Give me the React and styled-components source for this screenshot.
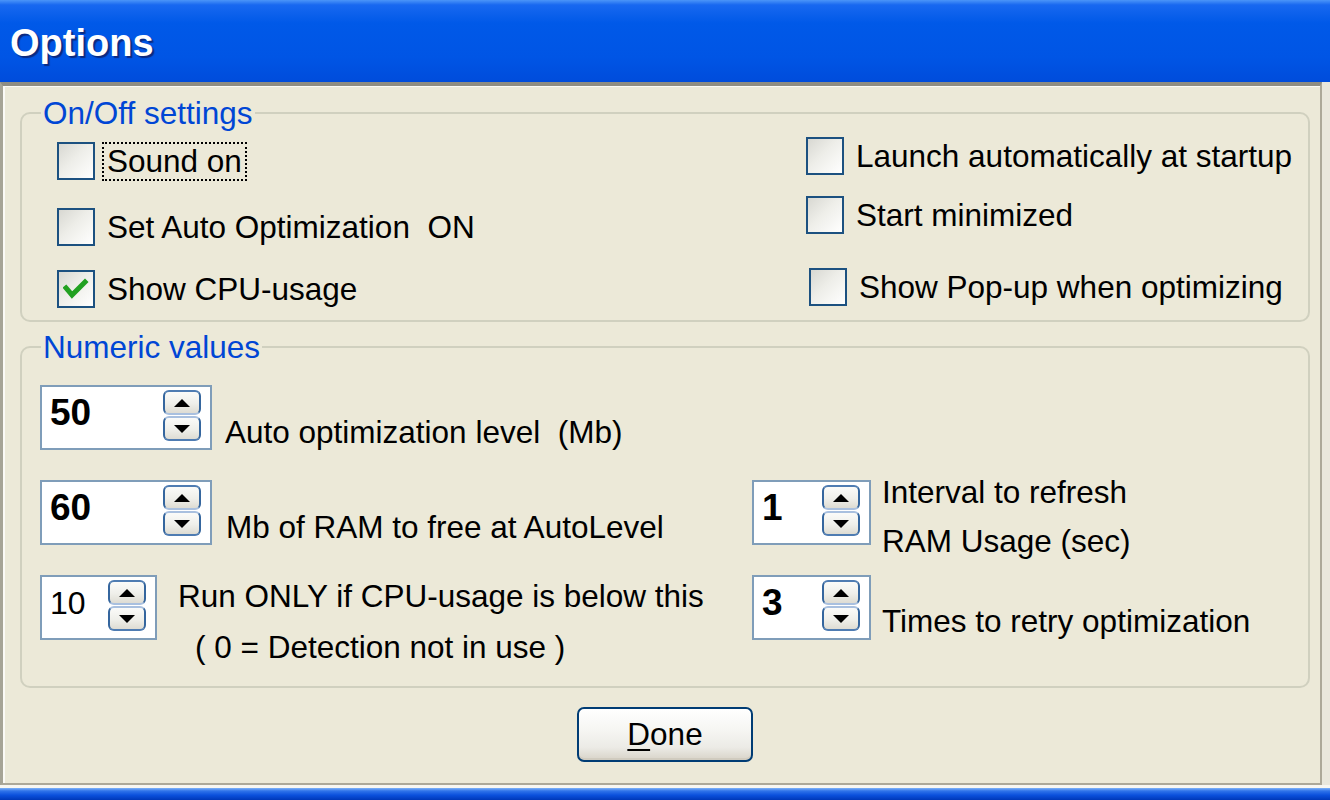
import React from 'react';
import styled, { createGlobalStyle } from 'styled-components';

const Global = createGlobalStyle`
  html, body { margin: 0; padding: 0; width: 1330px; height: 800px; overflow: hidden; background: #ECE9D8; }
  #root { width: 1330px; height: 800px; }
`;

const Window = styled.div`
  width: 1330px;
  height: 800px;
  display: flex;
  flex-direction: column;
  background: #ECE9D8;
  font-family: "Liberation Sans", Arial, sans-serif;
  color: #000;
`;

const TitleBar = styled.div`
  height: 82px;
  flex: none;
  box-sizing: border-box;
  padding: 4px 0 0 10px;
  display: flex;
  align-items: center;
  background: linear-gradient(180deg, #4b95f8 0%, #1868f0 6%, #0059e8 28%, #0055e5 70%, #004cdb 100%);
`;

const Title = styled.span`
  color: #fff;
  font-weight: 700;
  font-size: 38px;
  text-shadow: 2px 2px 1px #0b2a80;
`;

const Frame = styled.div`
  flex: 1;
  display: flex;
  min-height: 0;
`;

const Body = styled.div`
  flex: 1;
  display: flex;
  flex-direction: column;
  box-sizing: border-box;
  padding: 10px 0 0 17px;
  border-top: 4px solid #8f8d82;
  border-left: 3px solid #a6a496;
  border-right: 2px solid #aca899;
  border-bottom: 2px solid #aca899;
  box-shadow: inset 2px 1px 0 #fbfaf6;
`;

const RightEdge = styled.div`
  width: 8px;
  flex: none;
  background: #e9e7dc;
`;

const BottomBand = styled.div`
  height: 15px;
  flex: none;
  box-sizing: border-box;
  border-top: 3px solid #f7f6f1;
  background: linear-gradient(180deg, #7fb2f8 0%, #2f73ea 25%, #0b50dc 60%, #0038b8 100%);
`;

const Group = styled.fieldset`
  margin: ${p => p.$mt}px 0 0 0;
  padding: 0;
  width: 1290px;
  height: ${p => p.$h}px;
  box-sizing: border-box;
  border: 2px solid #D0D0BF;
  border-radius: 10px;
  min-width: 0;
`;

const Legend = styled.legend`
  margin-left: 19px;
  padding: 0 2px;
  font-size: 31.5px;
  line-height: 34px;
  color: #0046D5;
`;

const CheckGrid = styled.div`
  display: grid;
  grid-template-columns: 749px auto;
  padding-left: 35px;
`;

const CheckColumn = styled.div`
  display: flex;
  flex-direction: column;
`;

const CheckRow = styled.div`
  display: flex;
  align-items: center;
  height: 38px;
  margin-top: ${p => p.$mt}px;
  margin-left: ${p => p.$ml || 0}px;
`;

const Box = styled.span`
  width: 38px;
  height: 38px;
  flex: none;
  box-sizing: border-box;
  border: 2px solid #1C5180;
  background: linear-gradient(135deg, #d8d8d2 0%, #eeeee9 45%, #ffffff 100%);
  display: flex;
  align-items: center;
  justify-content: center;
`;

const CheckText = styled.span`
  margin-left: ${p => (p.$focus ? 7 : 12)}px;
  padding: ${p => (p.$focus ? '0 3px' : '0')};
  border: ${p => (p.$focus ? '2px dotted #000' : 'none')};
  font-size: 31.5px;
  line-height: ${p => (p.$focus ? 35 : 38)}px;
  white-space: pre;
`;

const SpinGrid = styled.div`
  display: grid;
  grid-template-columns: 712px auto;
  grid-auto-rows: 65px;
  row-gap: 30px;
  padding: 21px 0 0 18px;
`;

const SpinItem = styled.div`
  display: flex;
  align-items: flex-start;
`;

const SpinBox = styled.div`
  width: ${p => p.$w}px;
  height: 65px;
  flex: none;
  box-sizing: border-box;
  border: 2px solid #7F9DB9;
  background: #fff;
  display: flex;
  justify-content: space-between;
  align-items: flex-start;
  padding: 3px 9px 0 8px;
`;

const SpinValue = styled.span`
  font-size: ${p => (p.$bold ? 37 : 32)}px;
  font-weight: ${p => (p.$bold ? 700 : 400)};
  line-height: 46px;
`;

const SpinButtons = styled.div`
  display: flex;
  flex-direction: column;
  gap: 1px;
`;

const SpinBtn = styled.div`
  width: 38px;
  height: 25px;
  box-sizing: border-box;
  border: 2px solid #35669e;
  border-top-color: ${p => (p.$down ? '#a9c0df' : '#4f7cb2')};
  border-bottom-color: ${p => (p.$down ? '#4f7cb2' : '#a9c0df')};
  border-radius: 6px;
  background: linear-gradient(180deg, #fbfbf9 0%, #efefea 55%, #dedcd3 100%);
  display: flex;
  align-items: center;
  justify-content: center;
`;

const SpinLabel = styled.div`
  margin-left: ${p => p.$gap}px;
  margin-top: ${p => p.$top}px;
  font-size: 31.5px;
  line-height: ${p => p.$lh}px;
  white-space: pre;
`;

const Line = styled.div`
  padding-left: ${p => p.$indent || 0}px;
`;

const ButtonRow = styled.div`
  width: 1290px;
  display: flex;
  justify-content: center;
  margin-top: 19px;
`;

const Button = styled.button`
  width: 176px;
  height: 55px;
  box-sizing: border-box;
  border: 2px solid #003C74;
  border-radius: 7px;
  background: linear-gradient(180deg, #ffffff 0%, #f6f6f3 40%, #ecebe6 75%, #d8d3c8 100%);
  box-shadow: inset 0 -2px 0 #d0cbbf;
  font-family: "Liberation Sans", Arial, sans-serif;
  font-size: 31.5px;
  color: #000;
  padding: 0;
`;

const Underline = styled.span`
  text-decoration: underline;
  text-underline-offset: 4px;
  text-decoration-thickness: 2px;
`;

const Check = ({ checked }) => (
  <Box>
    {checked && (
      <svg width="26" height="22" viewBox="0 0 26 22">
        <polyline points="3,10 9,17 22,4" fill="none" stroke="#21A121" strokeWidth="5" strokeLinecap="square" />
      </svg>
    )}
  </Box>
);

const Arrow = ({ down }) => (
  <svg width="18" height="10" viewBox="0 0 18 10">
    {down ? <polygon points="1,1 17,1 9,9" fill="#000" /> : <polygon points="1,9 17,9 9,1" fill="#000" />}
  </svg>
);

const Spinner = ({ w, value, bold }) => (
  <SpinBox $w={w}>
    <SpinValue $bold={bold}>{value}</SpinValue>
    <SpinButtons>
      <SpinBtn><Arrow /></SpinBtn>
      <SpinBtn $down><Arrow down /></SpinBtn>
    </SpinButtons>
  </SpinBox>
);

export default function App() {
  return (
    <Window>
      <Global />
      <TitleBar>
        <Title>Options</Title>
      </TitleBar>
      <Frame>
        <Body>
          <Group $mt={0} $h={226}>
            <Legend>On/Off settings</Legend>
            <CheckGrid>
              <CheckColumn>
                <CheckRow $mt={12}>
                  <Check />
                  <CheckText $focus>Sound on</CheckText>
                </CheckRow>
                <CheckRow $mt={28}>
                  <Check />
                  <CheckText>{'Set Auto Optimization  ON'}</CheckText>
                </CheckRow>
                <CheckRow $mt={24}>
                  <Check checked />
                  <CheckText>Show CPU-usage</CheckText>
                </CheckRow>
              </CheckColumn>
              <CheckColumn>
                <CheckRow $mt={7}>
                  <Check />
                  <CheckText>Launch automatically at startup</CheckText>
                </CheckRow>
                <CheckRow $mt={21}>
                  <Check />
                  <CheckText>Start minimized</CheckText>
                </CheckRow>
                <CheckRow $mt={34} $ml={3}>
                  <Check />
                  <CheckText>Show Pop-up when optimizing</CheckText>
                </CheckRow>
              </CheckColumn>
            </CheckGrid>
          </Group>

          <Group $mt={8} $h={358}>
            <Legend>Numeric values</Legend>
            <SpinGrid>
              <SpinItem>
                <Spinner w={172} value="50" bold />
                <SpinLabel $gap={13} $top={29} $lh={36}>{'Auto optimization level  (Mb)'}</SpinLabel>
              </SpinItem>
              <div />
              <SpinItem>
                <Spinner w={172} value="60" bold />
                <SpinLabel $gap={14} $top={29} $lh={36}>Mb of RAM to free at AutoLevel</SpinLabel>
              </SpinItem>
              <SpinItem>
                <Spinner w={119} value="1" bold />
                <SpinLabel $gap={11} $top={-12} $lh={49}>
                  <Line>Interval to refresh</Line>
                  <Line>RAM Usage (sec)</Line>
                </SpinLabel>
              </SpinItem>
              <SpinItem>
                <Spinner w={117} value="10" />
                <SpinLabel $gap={21} $top={-4} $lh={51}>
                  <Line>Run ONLY if CPU-usage is below this</Line>
                  <Line $indent={17}>( 0 = Detection not in use )</Line>
                </SpinLabel>
              </SpinItem>
              <SpinItem>
                <Spinner w={119} value="3" bold />
                <SpinLabel $gap={11} $top={28} $lh={36}>Times to retry optimization</SpinLabel>
              </SpinItem>
            </SpinGrid>
          </Group>

          <ButtonRow>
            <Button><Underline>D</Underline>one</Button>
          </ButtonRow>
        </Body>
        <RightEdge />
      </Frame>
      <BottomBand />
    </Window>
  );
}
